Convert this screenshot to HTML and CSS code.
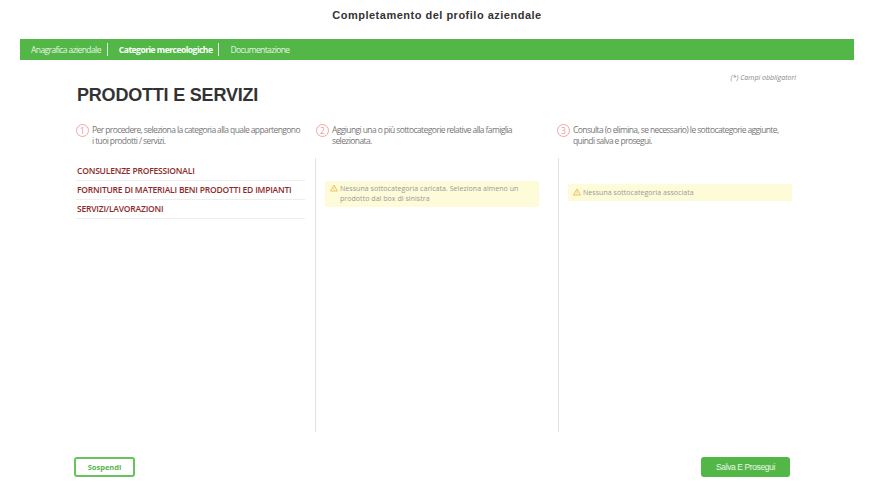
FILE: index.html
```html
<!DOCTYPE html>
<html lang="it">

<head>
	<meta charset="UTF-8">
	<title>Completamento del profilo aziendale</title>
	<link rel="stylesheet" href="styles.css">
</head>

<body>
	<h2 class="title">Completamento del profilo aziendale</h2>
	<nav class="tabs">
		<a class="tab">Anagrafica aziendale</a>
		<a class="tab active">Categorie merceologiche</a>
		<a class="tab last">Documentazione</a>
	</nav>
	<main class="content">
		<p class="required">(*) Campi obbligatori</p>
		<h1 class="heading">PRODOTTI E SERVIZI</h1>
		<div class="steps">
			<div class="step">
				<span class="num">1</span>
				<p>Per procedere, seleziona la categoria alla quale appartengono i tuoi prodotti / servizi.</p>
			</div>
			<div class="step">
				<span class="num">2</span>
				<p>Aggiungi una o più sottocategorie relative alla famiglia selezionata.</p>
			</div>
			<div class="step">
				<span class="num">3</span>
				<p>Consulta (o elimina, se necessario) le sottocategorie aggiunte, quindi salva e prosegui.</p>
			</div>
		</div>
		<div class="columns">
			<ul class="categories">
				<li>CONSULENZE PROFESSIONALI</li>
				<li>FORNITURE DI MATERIALI BENI PRODOTTI ED IMPIANTI</li>
				<li>SERVIZI/LAVORAZIONI</li>
			</ul>
			<div class="col col-mid">
				<div class="notice">
					<svg class="warn" viewBox="0 0 16 16"><path d="M8 2 L15 14 H1 Z" fill="none" stroke="#e8b03c" stroke-width="1.5" stroke-linejoin="round"/><path d="M8 6.5 V10.5 M8 11.5 V12.8" stroke="#e8b03c" stroke-width="1.3"/></svg>
					<span>Nessuna sottocategoria caricata. Seleziona almeno un prodotto dal box di sinistra</span>
				</div>
			</div>
			<div class="col col-right">
				<div class="notice">
					<svg class="warn" viewBox="0 0 16 16"><path d="M8 2 L15 14 H1 Z" fill="none" stroke="#e8b03c" stroke-width="1.5" stroke-linejoin="round"/><path d="M8 6.5 V10.5 M8 11.5 V12.8" stroke="#e8b03c" stroke-width="1.3"/></svg>
					<span>Nessuna sottocategoria associata</span>
				</div>
			</div>
		</div>
	</main>
	<footer class="actions">
		<button class="btn outline">Sospendi</button>
		<button class="btn solid">Salva E Prosegui</button>
	</footer>
</body>

</html>
```

FILE: styles.css
```css
* {
	box-sizing: border-box;
}

body {
	margin: 0;
	background-color: #fff;
	font-family: "Open Sans", sans-serif;
	color: #666;
}

.title {
	margin: 0;
	padding: 8px 20px 0 0;
	height: 39px;
	text-align: center;
	font-family: "Liberation Sans", sans-serif;
	font-size: 11px;
	line-height: 15px;
	letter-spacing: 0.5px;
	font-weight: bold;
	color: #333;
}

.tabs {
	display: flex;
	align-items: center;
	margin: 0 40px 0 20px;
	height: 21px;
	background-color: #52b747;
	padding-left: 11px;
}

.tab {
	font-size: 8.5px;
	letter-spacing: -0.6px;
	color: #e6f5e3;
	line-height: 13px;
	padding-right: 6px;
	margin-right: 11px;
	border-right: 1px solid #e6f5e3;
}

.tab.active {
	font-weight: bold;
	letter-spacing: -0.5px;
	color: #fff;
}

.tab.last {
	border-right: none;
}

.content {
	padding: 0 98px 0 76px;
}

.required {
	margin: 13px 0 0;
	text-align: right;
	font-size: 7px;
	font-style: italic;
	line-height: 10px;
	color: #888;
}

.heading {
	margin: 1px 0 0 1px;
	font-family: "Liberation Sans", sans-serif;
	font-size: 18px;
	letter-spacing: -0.2px;
	line-height: 22px;
	color: #333;
}

.steps {
	display: grid;
	grid-template-columns: 240px 241px 240px;
	margin-top: 17px;
}

.step {
	display: flex;
	gap: 3px;
	padding-right: 14px;
}

.step p {
	margin: 1px 0 0;
	font-size: 8.5px;
	line-height: 11px;
	letter-spacing: -0.6px;
	color: #777;
}

.num {
	flex: none;
	width: 13px;
	height: 13px;
	margin-top: 1px;
	border: 1px solid #f2a5a5;
	border-radius: 50%;
	font-size: 8.5px;
	line-height: 11px;
	text-align: center;
	color: #ee9a9a;
}

.columns {
	display: grid;
	grid-template-columns: 239px 243px 238px;
	margin-top: 12px;
	height: 274px;
}

.categories {
	margin: 0;
	padding: 4px 10px 0 0;
	list-style: none;
}

.categories li {
	padding: 3px 0 0 1px;
	height: 19px;
	border-bottom: 1px solid #eee;
	font-size: 8.5px;
	font-weight: 600;
	letter-spacing: -0.2px;
	line-height: 12px;
	color: #8c2a2a;
}

.col {
	border-left: 1px solid #e2e2e2;
}

.col-mid {
	padding: 23px 19px 0 9px;
}

.col-right {
	padding: 26px 4px 0 9px;
}

.notice {
	display: flex;
	gap: 2px;
	padding: 3px 4px 3px 5px;
	background-color: #fdfbd8;
	font-size: 7px;
	line-height: 10px;
	letter-spacing: 0.05px;
	color: #999;
}

.col-right .notice {
	padding-top: 4px;
}

.warn {
	flex: none;
	width: 8px;
	height: 8px;
}

.actions {
	display: flex;
	justify-content: space-between;
	padding: 25px 104px 0 74px;
}

.btn {
	height: 20px;
	border-radius: 3px;
	padding: 0;
}

.outline {
	width: 61px;
	border: 2px solid #68c25e;
	background: #fff;
	color: #52b747;
	font-family: "Open Sans", sans-serif;
	font-size: 7.5px;
	font-weight: bold;
}

.solid {
	width: 89px;
	border: none;
	background: #52b747;
	color: #e9f7e7;
	font-family: "Liberation Sans", sans-serif;
	font-size: 8.5px;
	letter-spacing: -0.4px;
}
```
